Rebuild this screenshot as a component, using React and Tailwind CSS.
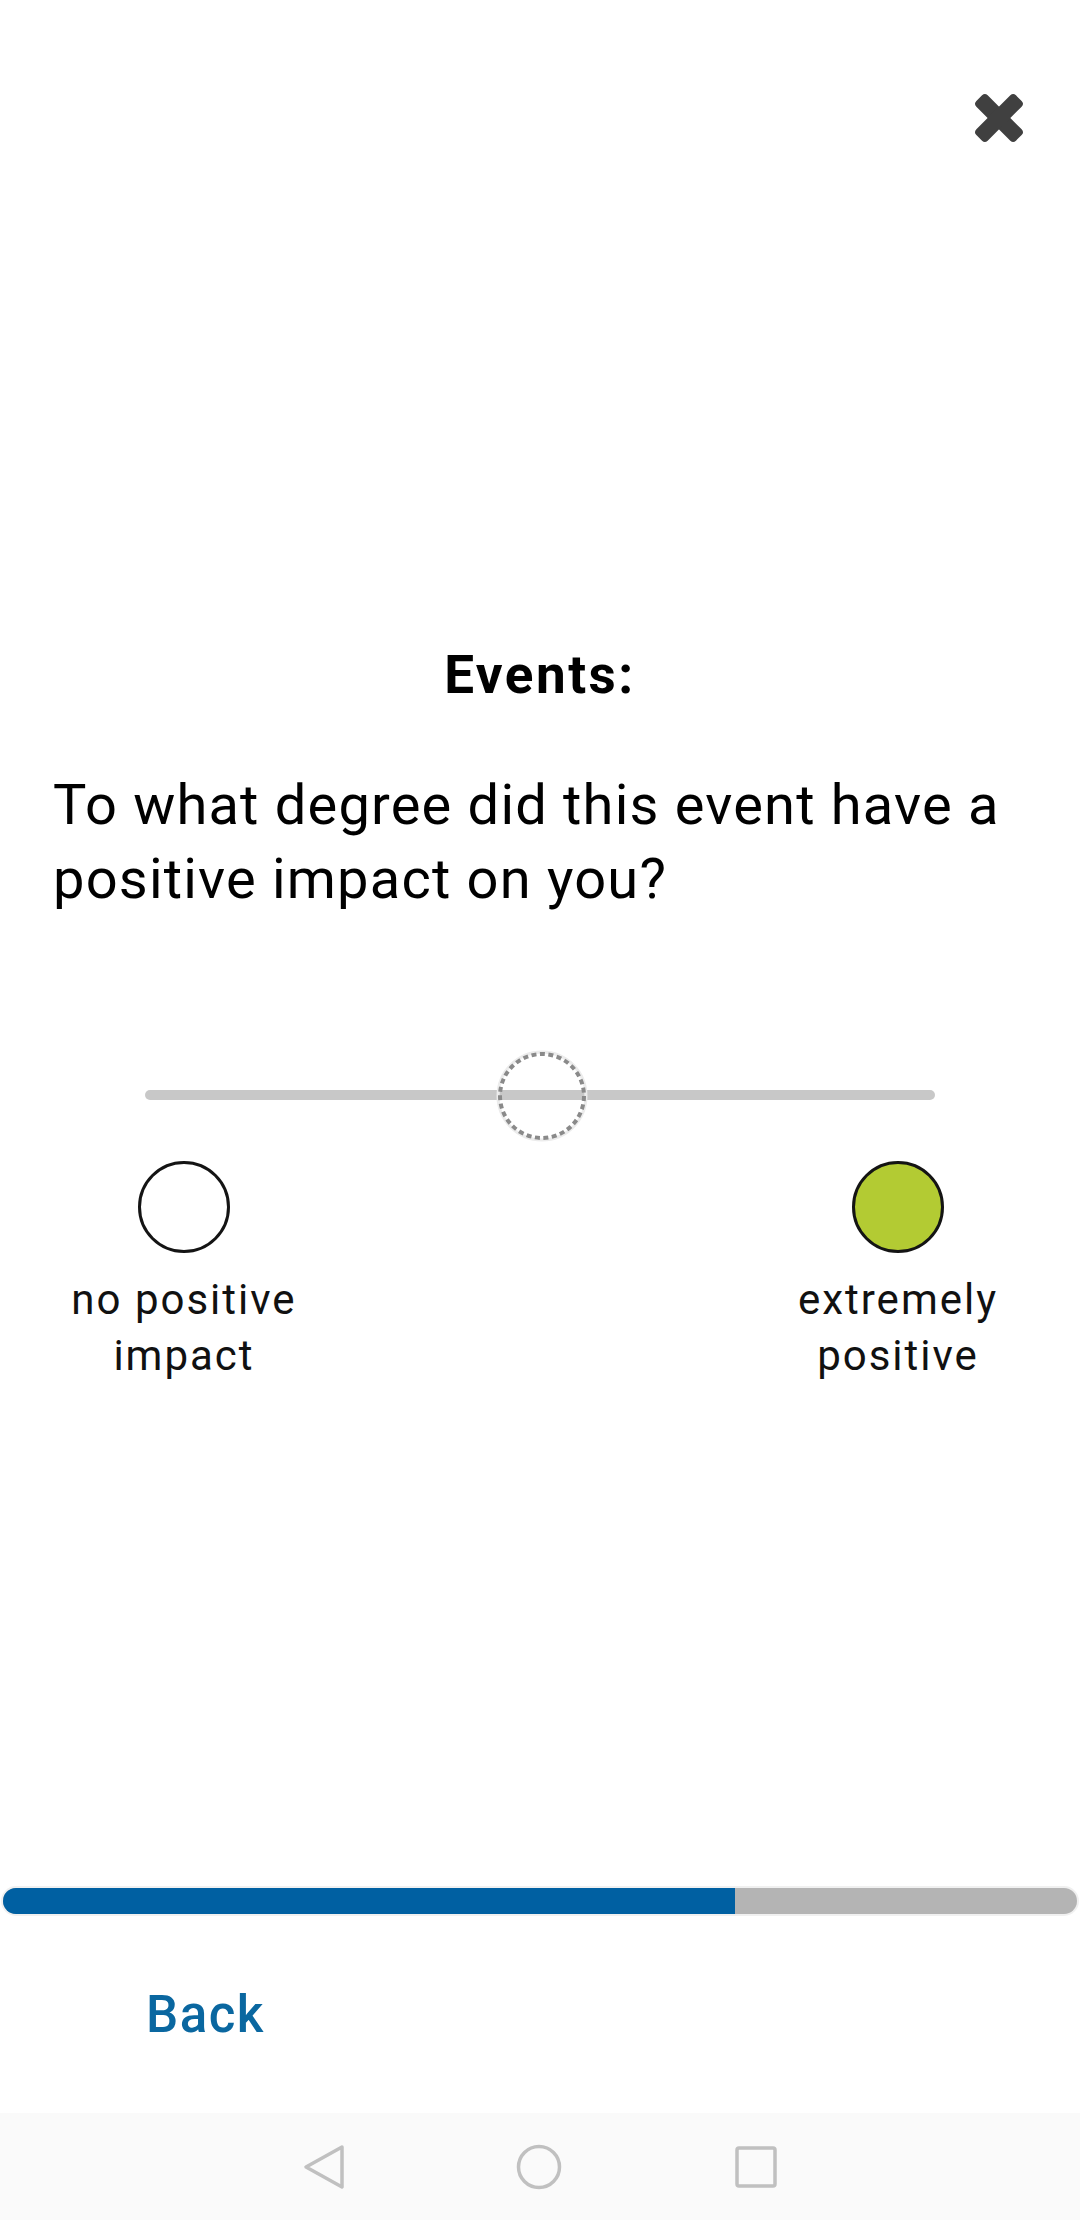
import React from "react";

function CloseIcon() {
  return (
    <svg width="50" height="50" viewBox="0 0 50 50" aria-hidden="true">
      <rect x="-3" y="17" width="56" height="16" rx="4" fill="#404040" transform="rotate(45 25 25)" />
      <rect x="-3" y="17" width="56" height="16" rx="4" fill="#404040" transform="rotate(-45 25 25)" />
    </svg>
  );
}

function Thumb() {
  return (
    <svg width="92" height="92" viewBox="0 0 92 92" aria-hidden="true">
      <circle cx="46" cy="46" r="44" fill="none" stroke="#ececec" strokeWidth="3" />
      <circle cx="46" cy="46" r="42" fill="none" stroke="#8a8a8a" strokeWidth="4" strokeDasharray="5 3.5" />
    </svg>
  );
}

function Choice({ fill, lines }) {
  return (
    <div className="flex w-[260px] flex-col items-center">
      <div className={`h-[92px] w-[92px] rounded-full border-[3px] border-[#141414] ${fill}`} />
      <div className="mt-[19px] text-center text-[42px] leading-[56px] tracking-[2px] text-[#111111]">
        {lines.map((l) => (
          <div key={l}>{l}</div>
        ))}
      </div>
    </div>
  );
}

export default function App() {
  return (
    <div
      className="flex h-[2220px] w-[1080px] flex-col overflow-hidden bg-white"
      style={{ fontFamily: "Roboto, 'Noto Sans', sans-serif" }}
    >
      <div className="flex justify-end pr-[56px] pt-[93px]">
        <CloseIcon />
      </div>

      <h1 className="mt-[501px] text-center text-[53px] font-bold leading-[62px] tracking-[2.5px] text-black">Events:</h1>

      <p className="mt-[62px] px-[53px] text-[56px] leading-[74px] tracking-[1.2px] text-black">
        To what degree did this event have a positive impact on you?
      </p>

      <div className="relative mx-[145px] mt-[134px] h-[91px]">
        <div className="absolute left-0 right-0 top-[40px] h-[10px] rounded-full bg-[#c8c8c8]" />
        <div className="absolute left-[351px] top-0">
          <Thumb />
        </div>
      </div>

      <div className="mt-[20px] flex justify-between pl-[54px] pr-[52px]">
        <Choice fill="bg-white" lines={["no positive", "impact"]} />
        <Choice fill="bg-[#b3cb33]" lines={["extremely", "positive"]} />
      </div>

      <div className="flex-1" />

      <div className="mx-[3px] flex h-[26px] overflow-hidden rounded-full bg-[#b4b4b4] ring-2 ring-[#f0f0f0]">
        <div className="h-full w-[732px] bg-[#0060a2]" />
      </div>

      <div className="h-[199px] pl-[146px] pt-[71px]">
        <span className="text-[51px] font-medium leading-[60px] tracking-[1.5px] text-[#0a67a0]">Back</span>
      </div>

      <div className="flex h-[107px] items-center justify-center bg-[#fafafa]">
        <div className="flex w-[1080px] items-center justify-center">
          <svg width="44" height="46" viewBox="0 0 44 46" aria-hidden="true">
            <path d="M40 3 L4 23 L40 43 Z" fill="none" stroke="#c0c0c0" strokeWidth="3.5" strokeLinejoin="round" />
          </svg>
          <svg width="46" height="46" viewBox="0 0 46 46" className="ml-[170px]" aria-hidden="true">
            <circle cx="23" cy="23" r="20.5" fill="none" stroke="#c0c0c0" strokeWidth="3.5" />
          </svg>
          <svg width="44" height="44" viewBox="0 0 44 44" className="ml-[172px]" aria-hidden="true">
            <rect x="3" y="3" width="38" height="38" rx="2" fill="none" stroke="#c0c0c0" strokeWidth="3.5" />
          </svg>
        </div>
      </div>
    </div>
  );
}
